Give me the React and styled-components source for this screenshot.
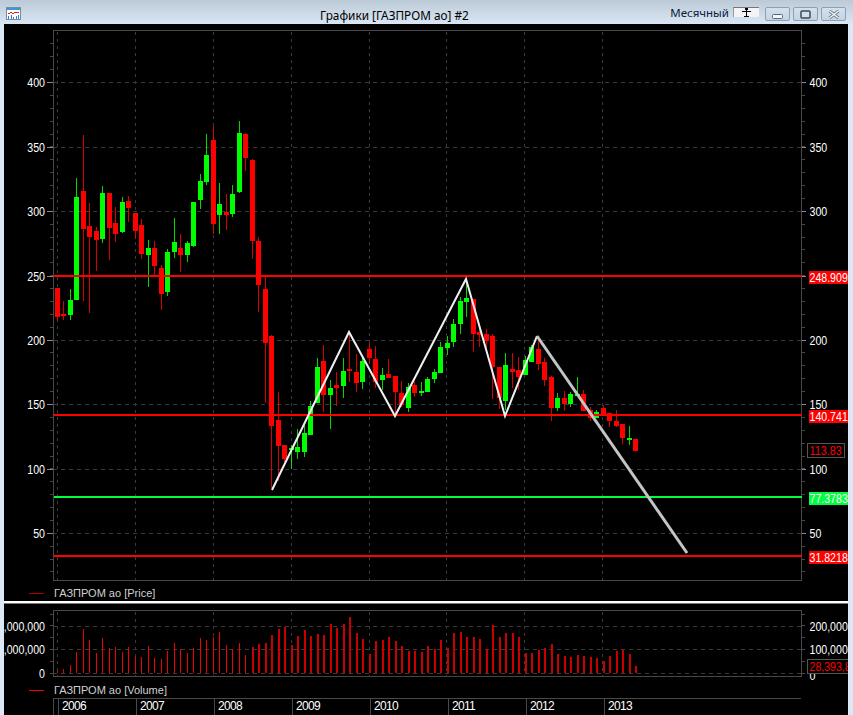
import React from "react";
import styled, { createGlobalStyle } from "styled-components";

// [wickTop, bodyTop, bodyBottom, wickBottom, green?] in pixels of the page, one per month from Jan 2006
const CANDLES = [
  [288, 288, 317, 321, 0], [301, 314, 316, 320, 0], [289, 300, 315, 320, 1], [178, 197, 300, 300, 1],
  [135, 191, 229, 301, 0], [203, 226, 237, 313, 0], [227, 231, 240, 271, 0], [186, 193, 239, 243, 1],
  [193, 193, 228, 260, 0], [207, 223, 234, 242, 0], [197, 202, 232, 233, 1], [196, 201, 208, 222, 0],
  [213, 213, 231, 239, 0], [219, 225, 254, 259, 0], [240, 248, 255, 287, 1], [241, 248, 266, 275, 0],
  [265, 268, 294, 310, 0], [249, 252, 292, 296, 1], [218, 242, 252, 258, 1], [234, 248, 255, 272, 0],
  [241, 243, 255, 262, 1], [202, 202, 246, 247, 1], [174, 181, 200, 209, 1], [134, 155, 182, 185, 1],
  [126, 140, 224, 234, 0], [183, 204, 215, 234, 1], [194, 212, 215, 230, 0], [185, 194, 214, 217, 1],
  [121, 133, 192, 193, 1], [133, 134, 158, 171, 0], [159, 160, 241, 259, 0], [237, 241, 285, 312, 0],
  [277, 289, 343, 403, 0], [335, 336, 426, 488, 0], [392, 420, 446, 481, 0], [445, 445, 459, 462, 0],
  [445, 448, 450, 469, 1], [429, 447, 452, 459, 1], [425, 433, 452, 457, 1], [401, 406, 435, 435, 1],
  [358, 367, 403, 403, 1], [345, 361, 395, 412, 0], [380, 388, 395, 429, 1], [372, 385, 388, 406, 0],
  [358, 371, 386, 398, 1], [332, 369, 371, 382, 0], [354, 372, 383, 392, 0], [358, 361, 382, 389, 1],
  [343, 349, 358, 363, 0], [346, 359, 382, 388, 0], [368, 375, 380, 390, 1], [359, 374, 378, 378, 0],
  [376, 376, 392, 414, 0], [381, 393, 405, 407, 0], [383, 387, 408, 412, 1], [381, 385, 393, 397, 0],
  [382, 391, 392, 396, 1], [377, 379, 392, 392, 1], [369, 372, 379, 383, 1], [342, 347, 373, 373, 1],
  [336, 343, 348, 355, 1], [319, 324, 342, 347, 1], [297, 301, 324, 334, 1], [280, 298, 302, 317, 1],
  [299, 299, 334, 352, 0], [327, 332, 335, 347, 0], [329, 334, 341, 350, 0], [334, 336, 367, 399, 0],
  [367, 367, 398, 409, 0], [353, 365, 401, 410, 1], [353, 369, 372, 388, 0], [357, 370, 377, 390, 0],
  [356, 360, 375, 375, 1], [345, 347, 362, 362, 1], [340, 349, 364, 370, 0], [358, 362, 380, 386, 0],
  [376, 377, 408, 421, 0], [393, 398, 408, 411, 1], [391, 398, 404, 411, 0], [392, 394, 404, 407, 1],
  [377, 394, 396, 396, 1], [390, 394, 411, 411, 0], [407, 410, 418, 421, 0], [410, 412, 418, 418, 1],
  [405, 408, 415, 415, 0], [413, 413, 421, 427, 0], [410, 421, 426, 427, 0], [424, 424, 438, 444, 0],
  [426, 438, 439, 445, 1], [439, 439, 451, 451, 0],
];

// tops of the volume bars in pixels of the page
const VOLUMES = [
  671, 669, 665, 652, 629, 640, 653, 638, 648, 647, 652, 647, 657, 657, 646, 658, 659, 651, 643, 649, 653, 648,
  638, 640, 637, 632, 645, 649, 643, 655, 647, 644, 643, 635, 629, 627, 645, 636, 630, 636, 634, 635, 624, 628,
  624, 617, 633, 639, 654, 641, 640, 637, 641, 646, 651, 651, 652, 646, 649, 640, 648, 633, 632, 637, 637, 639,
  649, 625, 637, 633, 633, 637, 653, 653, 650, 648, 644, 654, 656, 657, 655, 656, 657, 658, 661, 656, 651, 650,
  654, 666,
];

const YEARS = ["2006", "2007", "2008", "2009", "2010", "2011", "2012", "2013"];
const YEAR_X = [57, 134.5, 212.5, 290.5, 368.5, 446, 524, 602];

const PRICE_TOP = 24;
const VOLUME_TOP = 604;
const FRAME_LEFT = 49;
const FRAME_RIGHT = 797;
const candleX = (i) => Math.floor(53 + i * 6.5);

const PRICE_LABELS = [
  [400, 82], [350, 147], [300, 211], [250, 276], [200, 340], [150, 404], [100, 469], [50, 533],
];
const LEVELS = [
  { y: 276, label: "248.909", color: "#ff0000" },
  { y: 415, label: "140.741", color: "#ff0000" },
  { y: 497, label: "77.3783", color: "#00ff40" },
  { y: 556, label: "31.8218", color: "#ff0000" },
];

function GridColumns({ top, bottom }) {
  return YEAR_X.map((x) => (
    <line key={x} x1={Math.round(x) - 4 + 0.5} x2={Math.round(x) - 4 + 0.5} y1={top} y2={bottom}
      stroke="#3a3a3a" strokeDasharray="3 4" />
  ));
}

function AxisText({ x, y, anchor = "start", fill = "#fff", children }) {
  const text = String(children);
  const marks = text.replace(/[0-9]/g, "").length;
  const length = (text.length - marks) * 5.9 + marks * 2.9;
  return (
    <text x={x} y={y} textAnchor={anchor} fill={fill} fontSize="12.5"
      textLength={length} lengthAdjust="spacingAndGlyphs">
      {text}
    </text>
  );
}

function PriceChart() {
  const ticks = [];
  for (let i = -3; i <= 38; i++) ticks.push(82 + i * 12.88);
  return (
    <ChartSvg width="844" height="561" viewBox="0 0 844 561" shapeRendering="crispEdges">
      <g transform={`translate(0 ${-PRICE_TOP})`}>
        <GridColumns top={32} bottom={580} />
        {PRICE_LABELS.map(([v, y]) => (
          <line key={v} x1={FRAME_LEFT} x2={FRAME_RIGHT} y1={y + 0.5} y2={y + 0.5} stroke="#3a3a3a" strokeDasharray="4 4" />
        ))}
        <rect x={FRAME_LEFT + 0.5} y={30.5} width={FRAME_RIGHT - FRAME_LEFT} height={550} fill="none" stroke="#484848" />
        {ticks.map((y) => {
          const yy = Math.round(y) + 0.5;
          return (
            <g key={y} stroke="#484848">
              <line x1={46} x2={FRAME_LEFT} y1={yy} y2={yy} />
              <line x1={FRAME_RIGHT + 1} x2={FRAME_RIGHT + 4} y1={yy} y2={yy} />
            </g>
          );
        })}
        {PRICE_LABELS.map(([v, y]) => (
          <g key={v} stroke="#8a8a8a">
            <line x1={43} x2={FRAME_LEFT} y1={y + 0.5} y2={y + 0.5} />
            <line x1={FRAME_RIGHT + 1} x2={FRAME_RIGHT + 5} y1={y + 0.5} y2={y + 0.5} />
          </g>
        ))}

        {CANDLES.map(([wt, bt, bb, wb, up], i) => {
          const x = candleX(i);
          const color = up ? "#00ff00" : "#ff0000";
          return (
            <g key={i} fill={color}>
              <rect x={x} y={wt} width={1} height={wb - wt} opacity={0.85} />
              <rect x={x - 2} y={bt} width={5} height={Math.max(bb - bt, 2)} />
            </g>
          );
        })}

        {LEVELS.map((l) => (
          <rect key={l.y} x={FRAME_LEFT + 1} y={l.y - 1} width={FRAME_RIGHT - FRAME_LEFT} height={2} fill={l.color} />
        ))}

        <g shapeRendering="auto" fill="none" strokeLinejoin="miter">
          <polyline points="268,490 345,332 391,416 462,279 501,416 533,336" stroke="#f0f0f0" strokeWidth="2" />
          <line x1={533} y1={336} x2={683} y2={553} stroke="#c4c4c4" strokeWidth="3" />
        </g>

        {PRICE_LABELS.map(([v, y]) => (
          <g key={v}>
            {v !== 250 && <AxisText x={805.5} y={y + 5}>{v}</AxisText>}
            <AxisText x={41} y={y + 5} anchor="end">{v}</AxisText>
          </g>
        ))}

        {LEVELS.map((l) => (
          <g key={l.label}>
            <rect x={805} y={l.y - 5} width={39} height={13} fill={l.color} />
            <AxisText x={805.5} y={l.y + 6}>{l.label}</AxisText>
          </g>
        ))}
        <rect x={803.5} y={443.5} width={37} height={14} fill="#000" stroke="#555" />
        <AxisText x={805.5} y={455} fill="#ff0000">113.83</AxisText>
      </g>
    </ChartSvg>
  );
}

function VolumeChart() {
  const ticks = [];
  for (let i = 0; i < 6; i++) ticks.push(Math.round(673 - i * 11.9));
  const rows = [
    ["200,000,000", 626],
    ["100,000,000", 649],
  ];
  return (
    <ChartSvg width="844" height="78" viewBox="0 0 844 78" shapeRendering="crispEdges">
      <g transform={`translate(0 ${-VOLUME_TOP})`}>
        <GridColumns top={612} bottom={677} />
        {[626, 649, 673].map((y) => (
          <line key={y} x1={FRAME_LEFT} x2={FRAME_RIGHT} y1={y + 0.5} y2={y + 0.5} stroke="#3a3a3a" strokeDasharray="4 4" />
        ))}
        <rect x={FRAME_LEFT + 0.5} y={610.5} width={FRAME_RIGHT - FRAME_LEFT} height={66} fill="none" stroke="#484848" />
        {ticks.map((y) => (
          <g key={y} stroke="#484848">
            <line x1={46} x2={FRAME_LEFT} y1={y + 0.5} y2={y + 0.5} />
            <line x1={FRAME_RIGHT + 1} x2={FRAME_RIGHT + 4} y1={y + 0.5} y2={y + 0.5} />
          </g>
        ))}
        {VOLUMES.map((top, i) => {
          const wide = i >= 30;
          return (
            <rect key={i} x={candleX(i)} y={top} width={wide ? 2 : 1} height={673 - top} fill={wide ? "#c80000" : "#f00000"} />
          );
        })}
        {rows.map(([label, y]) => (
          <g key={label}>
            <AxisText x={41} y={y + 5} anchor="end">{label}</AxisText>
            <AxisText x={805.5} y={y + 5}>{label}</AxisText>
          </g>
        ))}
        <AxisText x={41} y={678} anchor="end">0</AxisText>
        <AxisText x={805.5} y={680}>0</AxisText>
        <rect x={803.5} y={659.5} width={42} height={14} fill="#000" stroke="#555" />
        <AxisText x={805.5} y={671} fill="#ff0000">28,393,8</AxisText>
      </g>
    </ChartSvg>
  );
}

function App() {
  return (
    <>
      <GlobalStyle />
      <Window>
        <TitleBar>
          <AppIcon width="15" height="13" viewBox="0 0 15 13" shapeRendering="crispEdges">
            <rect x="0.5" y="0.5" width="14" height="12" fill="#fff" stroke="#7d8a99" />
            <rect x="1" y="1" width="13" height="2" fill="#3a9ad9" />
            <path d="M2 6h2l1-1 1 1h2l1-1h4" fill="none" stroke="#d02030" />
            <path d="M2 12V9h1v3zM5 12V8h1v4zM7 12V10h1v2zM10 12V9h1v3zM12 12V8h1v4z" fill="#2a7fd0" />
          </AppIcon>
          <WindowTitle>Графики [ГАЗПРОМ ао] #2</WindowTitle>
          <PeriodLabel>Месячный</PeriodLabel>
          <PeriodBox>
            <svg width="9" height="9" viewBox="0 0 9 9" shapeRendering="crispEdges">
              <path d="M3 0h3v2H5v1h4v1H5v4h2v1H2V8h2V4H0V3h4V2H3z" fill="#000" />
            </svg>
          </PeriodBox>
          <CaptionButtons>
            <CaptionButton $pad="5px">
              <svg width="11" height="5" viewBox="0 0 11 5"><rect x="0.5" y="0.5" width="10" height="4" rx="1" fill="#f4f7fa" stroke="#5a6675" /></svg>
            </CaptionButton>
            <CaptionButton>
              <svg width="11" height="9" viewBox="0 0 11 9"><rect x="1" y="1" width="9" height="7" rx="1" fill="#d4e0ec" stroke="#3d4855" strokeWidth="1.5" /></svg>
            </CaptionButton>
            <CaptionButton>
              <svg width="12" height="9" viewBox="0 0 12 9"><path d="M1.5 1l9 7M10.5 1l-9 7" stroke="#6a7684" strokeWidth="3" /><path d="M1.5 1l9 7M10.5 1l-9 7" stroke="#f2f5f8" strokeWidth="1.4" /></svg>
            </CaptionButton>
          </CaptionButtons>
        </TitleBar>
        <ChartBody>
          <PriceChart />
          <Legend>
            <LegendLine $color="#b00000" />
            <LegendText>ГАЗПРОМ ао [Price]</LegendText>
          </Legend>
          <Divider />
          <VolumeChart />
          <Legend>
            <LegendLine $color="#ff0000" />
            <LegendText>ГАЗПРОМ ао [Volume]</LegendText>
          </Legend>
          <TimeAxis>
            <FirstCell />
            {YEARS.map((y) => (
              <YearCell key={y} $last={y === "2013"}>{y}</YearCell>
            ))}
          </TimeAxis>
        </ChartBody>
      </Window>
    </>
  );
}

const GlobalStyle = createGlobalStyle`
  html, body {
    margin: 0;
    padding: 0;
    background: #dce8f5;
    overflow: hidden;
  }
`;

const Window = styled.div`
  width: 853px;
  height: 715px;
  display: flex;
  flex-direction: column;
  background: #dce8f5;
  font-family: "Liberation Sans", Arial, sans-serif;
  overflow: hidden;
`;

const TitleBar = styled.div`
  height: 24px;
  flex: none;
  display: flex;
  align-items: flex-end;
  padding: 0 7px 3px 6px;
  box-sizing: border-box;
  background: linear-gradient(#bccad8, #d9e6f3);
  position: relative;
`;

const AppIcon = styled.svg`
  flex: none;
  margin-bottom: 1px;
`;

const WindowTitle = styled.span`
  position: absolute;
  left: 320px;
  top: 7px;
  font-family: "Noto Sans", sans-serif;
  font-size: 11.8px;
  line-height: 16px;
  color: #000;
`;

const PeriodLabel = styled.span`
  margin-left: auto;
  font-family: "Noto Sans", sans-serif;
  font-size: 11.5px;
  line-height: 16px;
  color: #0c1c3a;
`;

const PeriodBox = styled.div`
  width: 26px;
  height: 10px;
  margin: 0 6px 4px 4px;
  display: flex;
  align-items: center;
  justify-content: center;
  background: #f4f4f4;
  border-top: 1px solid #777;
  border-left: 1px solid #999;
  box-sizing: border-box;
`;

const CaptionButtons = styled.div`
  display: flex;
  gap: 3px;
`;

const CaptionButton = styled.div`
  width: 25px;
  height: 14px;
  display: flex;
  align-items: center;
  justify-content: center;
  padding-top: ${(p) => p.$pad || "0"};
  box-sizing: border-box;
  border: 1px solid #8ea0b5;
  border-radius: 2px;
  background: linear-gradient(#d4e0ec, #c3d3e4);
`;

const ChartBody = styled.div`
  width: 844px;
  margin-left: 4px;
  flex: 1;
  display: flex;
  flex-direction: column;
  background: #000;
  overflow: hidden;
`;

const ChartSvg = styled.svg`
  display: block;
  flex: none;
  font-family: "Liberation Sans", Arial, sans-serif;
`;

const Legend = styled.div`
  height: 16px;
  flex: none;
  display: flex;
  align-items: center;
  gap: 10px;
  padding-left: 25px;
`;

const LegendLine = styled.span`
  width: 15px;
  height: 1px;
  background: ${(p) => p.$color};
`;

const LegendText = styled.span`
  font-size: 11px;
  color: #d0d0d0;
`;

const Divider = styled.div`
  height: 3px;
  flex: none;
  background: #fff;
  border-bottom: 1px solid #777;
  box-sizing: border-box;
`;

const TimeAxis = styled.div`
  height: 17px;
  flex: none;
  display: flex;
  margin-left: 49px;
  width: 748px;
  border-top: 1px solid #484848;
  box-sizing: border-box;
`;

const FirstCell = styled.div`
  width: 4px;
  flex: none;
  border-left: 1px solid #484848;
`;

const YearCell = styled.div`
  flex: ${(p) => (p.$last ? "1" : "0 0 78px")};
  box-sizing: border-box;
  border-left: 1px solid #484848;
  padding-left: 3px;
  font-size: 12px;
  letter-spacing: -0.7px;
  line-height: 15px;
  color: #fff;
`;

export default App;
